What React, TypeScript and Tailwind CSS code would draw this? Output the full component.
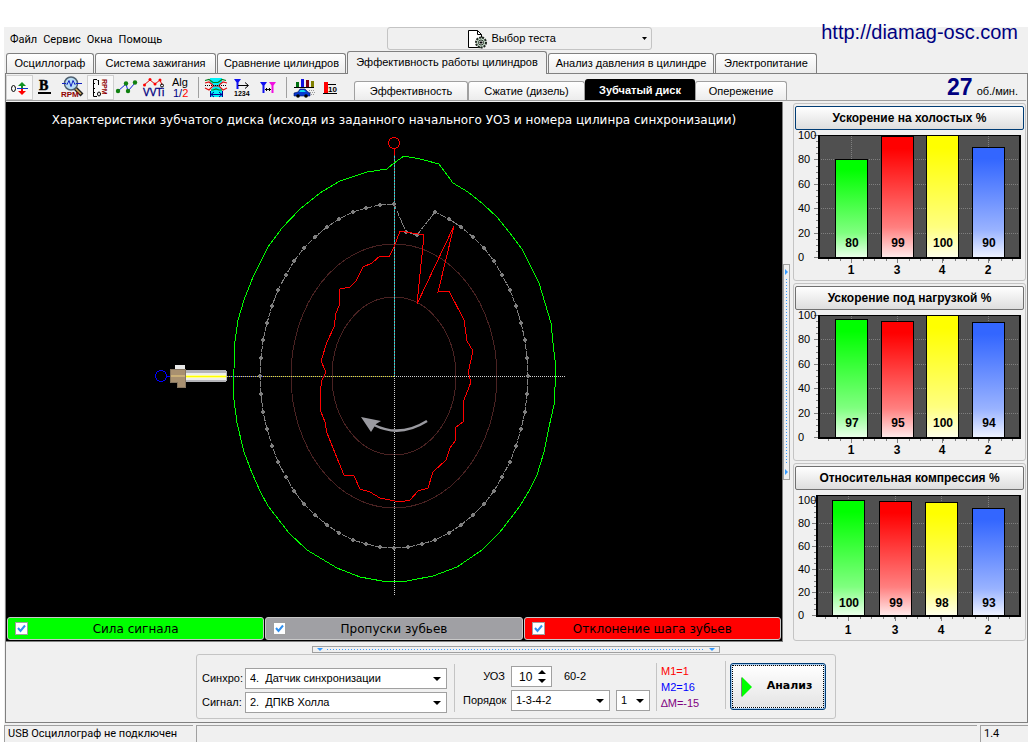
import { useState } from "react";
import type { ReactNode } from "react";

const MENU = ["Файл", "Сервис", "Окна", "Помощь"];

const MAIN_TABS = [
  { title: "Осциллограф", width: "w-[88px]" },
  { title: "Система зажигания", width: "w-[121px]" },
  { title: "Сравнение цилиндров", width: "w-[129px]" },
  { title: "Эффективность работы цилиндров", width: "w-[200px]" },
  { title: "Анализ давления в цилиндре", width: "w-[166px]" },
  { title: "Электропитание", width: "w-[102px]" },
];

const SUB_TABS = [
  { title: "Эффективность", width: "w-[114px]" },
  { title: "Сжатие (дизель)", width: "w-[117px]" },
  { title: "Зубчатый диск", width: "w-[110px]" },
  { title: "Опережение", width: "w-[92px]" },
];

/* TOOLBAR ICONS */
function Icon({ children }: { children: ReactNode }) {
  return (
    <svg width="27" height="25" viewBox="0 0 27 25" fill="none" className="block" aria-hidden="true">
      {children}
    </svg>
  );
}

const TOOLS = [
  {
    name: "Смещение нуля",
    pressed: true,
    icon: (
      <Icon>
        <ellipse cx="7.5" cy="13.5" rx="2" ry="3" stroke="#000" />
        <path d="M11 13.5h11" stroke="#1030c0" />
        <path d="M16 7l4 4h-3v2h-2v-2h-3z" fill="#109020" />
        <path d="M16 20l4-4h-3v-2h-2v2h-3z" fill="#f00" />
      </Icon>
    ),
  },
  {
    name: "Толщина линий",
    icon: (
      <Icon>
        <text x="6" y="15" fontSize="14" fontWeight="bold" fill="#000" stroke="#000" strokeWidth="0.5" className="font-['Liberation_Serif',serif]">B</text>
        <path d="M5 18h13" stroke="#000" strokeWidth="2" />
      </Icon>
    ),
  },
  {
    name: "Обороты",
    icon: (
      <Icon>
        <path d="M14 12l8 8" stroke="#222" strokeWidth="4" />
        <path d="M14 12l7 7" stroke="#d8b060" strokeWidth="1.5" />
        <circle cx="11" cy="8.5" r="6.5" fill="#b8dcf4" stroke="#506070" strokeWidth="1.5" />
        <path d="M2 8.5h4l1 1 2-4 2 6 2-6 2 4 1-1h6" stroke="#1020c0" />
        <text x="1" y="22" fontSize="8" fontWeight="bold" fill="#900000">RPM</text>
      </Icon>
    ),
  },
  {
    name: "Шкала оборотов",
    pressed: true,
    icon: (
      <Icon>
        <path d="M10 4.5H6.500v17H10M6 8.500h2M6 13.500h2M6 17.500h2" stroke="#000" />
        <path d="M10.500 6l1-1v5" stroke="#000" />
        <ellipse cx="12" cy="19" rx="1.500" ry="2" stroke="#000" />
        <text transform="translate(15 4) rotate(90)" fontSize="7" fontWeight="bold" fill="#900000">RPM</text>
      </Icon>
    ),
  },
  {
    name: "График по точкам",
    icon: (
      <Icon>
        <path d="M4 16l8-7 2 7 7-8" stroke="#1020e0" />
        <g fill="#108010">
          <circle cx="4" cy="16" r="2.200" />
          <circle cx="12" cy="8.500" r="2.200" />
          <circle cx="14" cy="16" r="2.200" />
          <circle cx="21" cy="7.500" r="2.200" />
        </g>
      </Icon>
    ),
  },
  {
    name: "Фазы VVTi",
    icon: (
      <Icon>
        <path d="M3 10l6-5 5 4 5-4 2 5" stroke="#e01010" />
        <g fill="#f00">
          <circle cx="3.500" cy="10" r="1.500" />
          <circle cx="9" cy="4.500" r="1.500" />
          <circle cx="14" cy="9" r="1.500" />
          <circle cx="19" cy="5" r="1.500" />
        </g>
        <circle cx="21" cy="10.500" r="1.500" stroke="#000" />
        <text x="2" y="21" fontSize="10" fill="#000080" stroke="#000080" strokeWidth="0.300">VVTi</text>
      </Icon>
    ),
  },
  {
    name: "Алгоритм",
    icon: (
      <Icon>
        <text x="4" y="11" fontSize="11" fill="#000">Alg</text>
        <text x="5" y="22" fontSize="11" fill="#000080">1/<tspan fill="#f00">2</tspan></text>
      </Icon>
    ),
  },
  {
    name: "Ширина окна",
    separated: true,
    icon: (
      <Icon>
        <path d="M8 3h12v4l-2 3v2l2 3v7H9v-7l2-3v-2L8 7z" fill="#00f0f8" />
        <path d="M3 5.500l4-1 4 3h5l4-3 4 1" stroke="#008020" strokeWidth="1.200" />
        <path d="M3 13l4 2 4-4h6l4 4 4-2" stroke="#e01010" strokeWidth="1.200" />
        <path d="M3 10.500h22" stroke="#000" strokeDasharray="1 1" />
        <path d="M3 8l4-1 4 3M17 10l4-3 4 1" stroke="#e01010" strokeWidth="1.200" />
        <path d="M9 15h2l3-1 3 1h3" stroke="#008020" strokeWidth="1.200" />
        <path d="M8.500 16v6M20.500 16v6M9 19.500h11M12 17l-3 2.500 3 2.500M17 17l3 2.500-3 2.500" stroke="#000090" />
      </Icon>
    ),
  },
  {
    name: "Порядок цилиндров",
    icon: (
      <Icon>
        <path d="M5 4h7l-2.500 3.500V14h-2V7.500z" fill="#1010f0" />
        <path d="M9 10.500h10M16 7.500l3.500 3-3.500 3" stroke="#000" />
        <text x="5" y="21" fontSize="7" fontWeight="bold" fill="#000">1234</text>
      </Icon>
    ),
  },
  {
    name: "Интервал между метками",
    icon: (
      <Icon>
        <path d="M4 7h7L8.500 10.500V18h-2v-7.500z" fill="#1010f0" />
        <path d="M13 7h7l-2.500 3.500V18h-2v-7.500z" fill="#f010e0" />
        <path d="M9 14.500h6M11 13l-1.500 1.500 1.500 1.500M13 13l1.500 1.500-1.500 1.500" stroke="#000" />
      </Icon>
    ),
  },
  {
    name: "Динамика автомобиля",
    separated: true,
    icon: (
      <Icon>
        <path d="M6 7h3v5H6z" fill="#007010" />
        <path d="M11 4h3v8h-3z" fill="#1010e0" />
        <path d="M16 5h3v7h-3z" fill="#800010" />
        <path d="M21 6h3v6h-3z" fill="#808000" />
        <path d="M4 12.500h20" stroke="#000" />
        <path d="M4 18l4-1 2-3h5l3 3 2 1v3H4z" fill="#0838d0" stroke="#001060" strokeWidth="0.600" />
        <path d="M9 17l1.500-2H14l2 2z" fill="#10d8f0" />
        <circle cx="8" cy="21" r="1.800" fill="#000" />
        <circle cx="16" cy="21" r="1.800" fill="#000" />
        <path d="M19 15.500h5M20 17.500h5M21 19.500h3" stroke="#999" strokeDasharray="1 1" />
      </Icon>
    ),
  },
  {
    name: "Столбцы",
    icon: (
      <Icon>
        <path d="M7 7h4v11H7z" fill="#f00" />
        <path d="M11 9.500h8M6 18.500h14" stroke="#000" />
        <text x="11" y="17" fontSize="8" fontWeight="bold" fill="#000">10</text>
      </Icon>
    ),
  },
];

function Toolbar() {
  return (
    <div className="flex w-[348px] shrink-0 items-center pt-px">
      {TOOLS.map((tool) => (
        <div key={tool.name} className="flex h-[25px]">
          {tool.separated && <div className="mx-[3px] my-0.5 w-px bg-[#a0a0a0]" />}
          <button
            type="button"
            aria-label={tool.name}
            title={tool.name}
            className={tool.pressed ? "w-[27px] overflow-hidden bg-[#f8f8f8] inset-ring inset-ring-[#d0d0d0]" : "w-[27px] overflow-hidden"}
          >
            {tool.icon}
          </button>
        </div>
      ))}
    </div>
  );
}

/* TOOTHED DISC PLOT */
const CX = 394;
const CY = 376;

// 60-2 wheel: the two missing teeth sit closer to the centre
const TEETH = Array.from({ length: 60 }, (_, i) => {
  const angle = (i * 6 * Math.PI) / 180;
  const k = i === 1 || i === 2 ? 0.84 : 1;
  return [Math.round(CX + 134 * k * Math.sin(angle)), Math.round(CY - 172 * k * Math.cos(angle))];
});

const SIGNAL =
  "394,163 404,156 420,159 439,164 453,183 468,192 483,204 497,217 509,232 522,249 530,265 539,283 545,303 551,323 553,343 556,369 555,387 554,405 549,427 544,452 537,475 529,491 520,506 500,532 482,550 457,567 433,576 407,581 382,581 360,577 337,568 307,550 289,533 268,506 260,491 252,473 244,452 237,423 233,392 233,376 234,369 235,341 238,320 244,300 253,277 268,247 282,228 300,209 320,193 340,181 367,172 387,169";

const DEVIATION =
  "400,231 424,235 417,304 454,226 438,292 449,291 464,320 467,341 473,351 469,369 468,372 471,382 464,400 463,422 456,427 455,441 450,448 446,460 433,472 428,488 418,491 410,500 400,502 380,498 370,492 360,489 354,476 344,475 337,458 327,433 325,422 321,412 320,392 322,380 326,372 321,361 327,342 334,327 336,313 339,306 340,289 350,287 356,281 363,267 372,263 380,256 389,257 394,247";

function DiscPlot({ signal, gaps, deviation }: { signal: boolean; gaps: boolean; deviation: boolean }) {
  return (
    <svg viewBox="6 130 776 486" className="block w-full" fill="none" shapeRendering="crispEdges" role="img" aria-label="Зубчатый диск">
      <ellipse cx={CX} cy={CY} rx="103" ry="132" stroke="#4a2222" />
      <ellipse cx={CX} cy={CY} rx="62" ry="79" stroke="#4a2222" />

      {/* axes */}
      <path d="M394.500 152V376" stroke="#30d8d8" />
      <path d="M394.500 152V376" stroke="#b05050" strokeDasharray="1 2" />
      <path d="M394.500 376V596M394 376.500H565" stroke="#d0d0d0" strokeDasharray="1 1" />
      <path d="M227 376.500H264" stroke="#2020e0" />
      <path d="M264 376.500H394" stroke="#30306a" />
      <path d="M227 376.500H394" stroke="#f0e820" strokeDasharray="1 1" />

      {signal && <polygon points={SIGNAL} stroke="#00ff00" />}
      {gaps && (
        <g>
          <polygon points={TEETH.map((p) => p.join(",")).join(" ")} stroke="#808080" strokeDasharray="6 1" />
          {TEETH.map(([x, y]) => (
            <path key={`${x}-${y}`} d={`M${x - 2} ${y - 1}h1v-1h2v1h1v2h-1v1h-2v-1h-1z`} fill="#808080" />
          ))}
        </g>
      )}
      {deviation && <polygon points={DEVIATION} stroke="#ff0000" />}

      {/* top dead centre mark */}
      <circle cx="394" cy="143" r="5.500" stroke="#ff0000" />
      <path d="M394.500 148v7" stroke="#ff0000" />

      {/* sensor */}
      <circle cx="161" cy="376" r="5.500" stroke="#0000ff" />
      <path d="M166 376.500h5" stroke="#0000ff" />
      <path d="M185 370h41v1h1v10h-1v1h-41z" fill="#b4b4b8" />
      <path d="M186 373h40v7h-40z" fill="#eeeeea" />
      <path d="M186 375h40v3h-40z" fill="#ffff90" />
      <path d="M186 376h40v1h-40z" fill="#ffff00" />
      <path d="M175 365h10v4h-10z" fill="#e8e8e8" />
      <path d="M170.500 369.500h15v18h-8v-5h-7z" fill="#a89070" stroke="#857560" />
      <path d="M171 375h14v2h-14z" fill="#cbb078" />

      {/* rotation direction */}
      <g shapeRendering="auto">
        <path d="M374 425Q400 438 427 421" stroke="#9a9aa0" strokeWidth="2.500" />
        <path d="M361 417l20 4-5 3-5 8z" fill="#9a9aa0" />
      </g>
    </svg>
  );
}

function Legend({ title, color, checked, onChange }: { title: string; color: string; checked: boolean; onChange: (v: boolean) => void }) {
  return (
    <label className={`flex h-[23px] flex-1 items-center rounded-[3px] border border-[#c8c8c8] px-[7px] ${color}`}>
      <span className="grid">
        <input
          type="checkbox"
          checked={checked}
          onChange={(e) => onChange(e.target.checked)}
          className="peer col-start-1 row-start-1 size-[13px] appearance-none border border-[#a0a0a0] bg-white"
        />
        <svg viewBox="0 0 13 13" className="pointer-events-none invisible col-start-1 row-start-1 size-[13px] peer-checked:visible" fill="none">
          <path d="M3 6l2.500 3L10 3.500" stroke="#2f8fef" strokeWidth="2" />
        </svg>
      </span>
      <span className="flex-1 pr-[13px] text-center font-['DejaVu_Sans',Verdana,sans-serif] text-[12px]">{title}</span>
    </label>
  );
}

/* SIDE BAR CHARTS */
type Chart = {
  id: string;
  title: string;
  focused?: boolean;
  left: number;
  top: number;
  zero: number;
  xs: number[];
  values: number[];
};

const CHARTS: Chart[] = [
  { id: "idle", title: "Ускорение на холостых %", focused: true, left: 26, top: 7, zero: 129, xs: [42, 88, 133, 179], values: [80, 99, 100, 90] },
  { id: "load", title: "Ускорение под нагрузкой %", left: 26, top: 7, zero: 129, xs: [42, 88, 133, 179], values: [97, 95, 100, 94] },
  { id: "comp", title: "Относительная компрессия %", left: 24, top: 12, zero: 127, xs: [39, 86, 132, 179], values: [100, 99, 98, 93] },
];

const BAR_COLORS = ["#00ff00", "#ff0000", "#ffff00", "#3366ff"];
const CYLINDERS = [1, 3, 4, 2];

function BarChart({ id, left, top, zero, xs, values }: Chart) {
  const y = (v: number) => Math.round(zero - ((zero - top) * v) / 100);
  const minor = Array.from({ length: 21 }, (_, i) => i * 5);
  const ticks = Array.from({ length: 17 }, (_, i) => xs[0] - 7 + Math.round(i * 11.5)).filter((x) => x < 226);

  return (
    <svg viewBox="2 2 229 149" className="block w-full text-[12px]" shapeRendering="crispEdges" role="img" aria-label={id}>
      <defs>
        {BAR_COLORS.map((c) => (
          <linearGradient key={c} id={`${id}-${c.slice(1)}`} x1="0" y1="0" x2="0" y2="1">
            <stop offset="0.1" stopColor={c} />
            <stop offset="0.75" stopColor={c} stopOpacity="0.5" />
            <stop offset="1" stopColor={c} stopOpacity="0.08" />
          </linearGradient>
        ))}
      </defs>
      <rect x={left} y="7" width={227 - left} height={zero - 6} fill="#505050" />
      {[20, 40, 60, 80].map((v) => (
        <path key={v} d={`M${left} ${y(v) + 0.5}H226`} stroke="#808080" strokeDasharray="1 1" />
      ))}
      {xs.map((x) => (
        <path key={x} d={`M${x + 16.5} 8V${zero}`} stroke="#808080" strokeDasharray="1 1" />
      ))}
      {minor.map((v) => (
        <path key={v} d={`M${left - (v % 20 ? 3 : 5)} ${y(v) + 0.5}H${left}`} stroke="#808080" />
      ))}
      {ticks.map((x) => (
        <path key={x} d={`M${x + 0.5} ${zero + 2}v2`} stroke="#808080" />
      ))}
      <path d={`M${left - 1} 7.500H228`} stroke="#000" />
      <path d={`M${left} 7V${zero + 1}H227V7`} fill="none" stroke="#000" strokeWidth="2" />
      {[0, 20, 40, 60, 80, 100].map((v) => (
        <text key={v} x="5" y={y(v) + 4} fontSize="11">{v}</text>
      ))}
      {xs.map((x, i) => (
        <g key={x} fontWeight="bold" textAnchor="middle">
          <rect x={x + 0.5} y={y(values[i]) + 0.5} width="32" height={zero - y(values[i])} fill="#fff" />
          <rect x={x + 0.5} y={y(values[i]) + 0.5} width="32" height={zero - y(values[i])} fill={`url(#${id}-${BAR_COLORS[i].slice(1)})`} stroke="#000" />
          <text x={x + 17} y="119">{values[i]}</text>
          <path d={`M${x + 16.5} ${zero + 2}v4`} stroke="#808080" />
          <text x={x + 16} y="146">{CYLINDERS[i]}</text>
        </g>
      ))}
    </svg>
  );
}

function ChartPanel(props: Chart) {
  return (
    <section className="rounded-[3px] border border-[#c4c4c4] p-px pt-0.5">
      <button
        type="button"
        className={`block h-6 w-full rounded-[2px] border bg-linear-to-b from-white to-[#dedede] text-[12px] font-bold ${props.focused ? "border-[#003c74]" : "border-[#707070]"}`}
      >
        {props.title}
      </button>
      <BarChart {...props} />
    </section>
  );
}

function Triangle({ d, className }: { d: string; className: string }) {
  return (
    <svg viewBox="0 0 8 4" className={`pointer-events-none h-1 w-2 ${className}`} aria-hidden="true">
      <path d={d} fill="currentColor" />
    </svg>
  );
}

const DOWN = "M0 0h8L4 4z";
const UP = "M0 4h8L4 0z";

function Dropdown({ id, options, className, label }: { id: string; options: string[]; className: string; label?: string }) {
  return (
    <span className={`grid items-center ${className}`}>
      <select id={id} aria-label={label} className="col-start-1 row-start-1 h-[21px] w-full appearance-none border border-[#a0a0a0] bg-white px-1 text-[11px] leading-none">
        {options.map((o) => (
          <option key={o}>{o}</option>
        ))}
      </select>
      <Triangle d={DOWN} className="col-start-1 row-start-1 mr-1.5 justify-self-end" />
    </span>
  );
}

function Controls() {
  const [advance, setAdvance] = useState(10);

  return (
    <form className="mx-auto flex h-[65px] w-[640px] items-start rounded-[3px] border border-[#c4c4c4] px-[5px] text-[11px]">
      <div className="mt-[13px] grid grid-cols-[43px_202px] items-center gap-y-[3px]">
        <label htmlFor="sync">Синхро:</label>
        <Dropdown id="sync" options={["4.\u00a0\u00a0Датчик синхронизации"]} className="w-full" />
        <label htmlFor="sig">Сигнал:</label>
        <Dropdown id="sig" options={["2.\u00a0\u00a0ДПКВ Холла"]} className="w-full" />
      </div>
      <div className="mt-[9px] ml-[7px] h-12 w-px bg-[#c4c4c4]" />
      <div className="mt-[11px] ml-2 grid grid-cols-[42px_139px] items-center gap-x-1.5 gap-y-[3px]">
        <label htmlFor="advance" className="text-right">УОЗ</label>
        <div className="flex items-center">
          <span className="flex h-[21px] w-[41px] border border-[#a0a0a0] bg-white">
            <input
              id="advance"
              inputMode="numeric"
              value={advance}
              onChange={(e) => setAdvance(Number(e.target.value) || 0)}
              className="w-[26px] pl-[7px] text-[12px] outline-none"
            />
            <span className="flex flex-col justify-center gap-[5px]">
              <button type="button" aria-label="Больше" onClick={() => setAdvance(advance + 1)}>
                <Triangle d={UP} className="block" />
              </button>
              <button type="button" aria-label="Меньше" onClick={() => setAdvance(advance - 1)}>
                <Triangle d={DOWN} className="block" />
              </button>
            </span>
          </span>
          <span className="ml-3">60-2</span>
        </div>
        <label htmlFor="order" className="text-right">Порядок</label>
        <div className="flex gap-1.5">
          <Dropdown id="order" options={["1-3-4-2"]} className="w-[99px]" />
          <Dropdown id="cylinder" label="Цилиндр" options={["1"]} className="w-[34px]" />
        </div>
      </div>
      <div className="mt-2 ml-1.5 h-12 w-px bg-[#c4c4c4]" />
      <div className="mt-2 ml-1 w-16 text-[11px] leading-4">
        <p className="text-[#f00]">M1=1</p>
        <p className="text-[#00f]">M2=16</p>
        <p className="text-[#800080]">∆M=-15</p>
      </div>
      <div className="mt-1.5 h-12 w-px bg-[#c4c4c4]" />
      <button type="button" className="mt-2 ml-1 h-[47px] w-24 rounded-[3px] border border-[#003c74] bg-[#a8ccf0] p-px">
        <span className="flex h-full items-center border border-dotted border-black bg-linear-to-b from-white to-[#e4e4e4] pl-2 font-['DejaVu_Sans',Verdana,sans-serif] text-[11px] font-bold">
          <svg viewBox="0 0 11 20" className="h-5 w-[11px]" aria-hidden="true">
            <path d="M0.500 0.500v19" stroke="#808080" />
            <path d="M1 0l10 10L1 20z" fill="#00ff00" />
          </svg>
          <span className="flex-1 pl-1 text-center">Анализ</span>
        </span>
      </button>
    </form>
  );
}

export default function App() {
  const [tab, setTab] = useState(3);
  const [subTab, setSubTab] = useState(2);
  const [shown, setShown] = useState([true, true, true]);

  const toggle = (i: number) => (v: boolean) => setShown(shown.map((s, k) => (k === i ? v : s)));

  return (
    <div className="flex min-h-screen flex-col bg-white px-1 pt-[27px] pb-1 font-['Liberation_Sans',Arial,sans-serif] text-[11px] text-black">
      <div className="flex flex-1 flex-col bg-[#f0f0f0]">
        {/* MENU */}
        <header className="relative flex h-6">
          <nav className="flex flex-1 items-center gap-1.5 pt-0.5 pl-1.5 font-[Roboto,Tahoma,sans-serif]">
            {MENU.map((m) => (
              <button key={m} type="button">{m}</button>
            ))}
          </nav>
          <button type="button" className="flex h-[23px] w-[265px] items-center justify-end rounded-[3px] border border-[#c4c4c4] pr-1">
            <svg width="22" height="20" viewBox="0 0 22 20" fill="none" aria-hidden="true">
              <path d="M1.500 1.500h9l4 4v13h-13z" fill="#fff" stroke="#000" />
              <path d="M10.500 1.500v4h4" stroke="#000" />
              <circle cx="14" cy="13.500" r="5" fill="#c4d8c8" stroke="#202820" strokeWidth="2" strokeDasharray="2 1" />
              <circle cx="14" cy="13.500" r="2.500" fill="#fff" stroke="#203020" />
              <path d="M14 12v3M12.500 13.500h3" stroke="#000" />
            </svg>
            <span className="ml-[3px] w-[150px] text-left">Выбор теста</span>
            <svg width="5" height="3" viewBox="0 0 5 3" aria-hidden="true">
              <path d="M0 0h5L2.500 3z" />
            </svg>
          </button>
          <div className="flex-1" />
          <a href="http://diamag-osc.com" className="absolute -top-2 right-2.5 text-[20px] leading-[26px] text-[#000080]">
            http://diamag-osc.com
          </a>
        </header>

        {/* MAIN TABS */}
        <div role="tablist" className="flex h-[22px] items-end gap-px pl-0.5">
          {MAIN_TABS.map((t, i) => (
            <button
              key={t.title}
              type="button"
              role="tab"
              aria-selected={i === tab}
              onClick={() => setTab(i)}
              className={`rounded-t-[3px] border border-[#808080] whitespace-nowrap ${t.width} ${
                i === tab ? "relative -mb-px h-[23px] border-b-0 bg-[#f0f0f0] pb-0.5" : "h-5 border-b-0 bg-linear-to-b from-white to-[#ececec]"
              }`}
            >
              {t.title}
            </button>
          ))}
        </div>

        <main className="ml-px flex flex-1 flex-col border border-[#808080] pr-px">
          {/* TOOLBAR AND SUB TABS */}
          <div className="flex h-[27px] border-b border-[#a0a0a0]">
            <Toolbar />
            <div role="tablist" className="flex items-end">
              {SUB_TABS.map((t, i) => (
                <button
                  key={t.title}
                  type="button"
                  role="tab"
                  aria-selected={i === subTab}
                  onClick={() => setSubTab(i)}
                  className={`rounded-t-[3px] border border-b-0 whitespace-nowrap ${t.width} ${
                    i === subTab ? "h-[21px] border-black bg-black font-bold text-white" : "h-[19px] border-[#a0a0a0] bg-linear-to-b from-white to-[#ececec]"
                  }`}
                >
                  {t.title}
                </button>
              ))}
            </div>
            <p className="ml-auto flex items-baseline gap-1 pr-2 leading-[27px]">
              <strong className="text-[23px] text-[#000080]">27</strong>
              <span>об./мин.</span>
            </p>
          </div>

          <div className="flex pt-px">
            {/* PLOT */}
            <div className="flex min-w-0 flex-1 flex-col border-r border-b border-[#808080] bg-black">
              <h1 className="pt-2 text-center font-['DejaVu_Sans',Verdana,sans-serif] text-[12px] leading-5 whitespace-nowrap text-white">
                Характеристики зубчатого диска (исходя из заданного начального УОЗ и номера цилинра синхронизации)
              </h1>
              <DiscPlot signal={shown[0]} gaps={shown[1]} deviation={shown[2]} />
              <div className="mt-px flex gap-px px-px pb-px">
                <Legend title="Сила сигнала" color="bg-[#00ff00]" checked={shown[0]} onChange={toggle(0)} />
                <Legend title="Пропуски зубьев" color="bg-[#a0a0a4]" checked={shown[1]} onChange={toggle(1)} />
                <Legend title="Отклонение шага зубьев" color="bg-[#ff0000]" checked={shown[2]} onChange={toggle(2)} />
              </div>
            </div>

            {/* VERTICAL SPLITTER */}
            <div className="mr-[3px] flex h-[216px] w-[7px] flex-col items-center justify-between self-center border border-[#a0a0a0] py-1 text-[#3399ff]">
              <svg width="3" height="6" viewBox="0 0 3 6"><path d="M0 0l3 3-3 3z" fill="currentColor" /></svg>
              <div className="my-1 w-px flex-1 bg-[repeating-linear-gradient(#3399ff_0_1px,transparent_1px_3px)]" />
              <svg width="3" height="6" viewBox="0 0 3 6"><path d="M0 0l3 3-3 3z" fill="currentColor" /></svg>
            </div>

            <aside className="flex w-[233px] shrink-0 flex-col gap-0.5 pt-px">
              {CHARTS.map((c) => (
                <ChartPanel key={c.id} {...c} />
              ))}
            </aside>
          </div>

          {/* HORIZONTAL SPLITTER */}
          <div className="mx-auto mt-1 mb-px flex h-[7px] w-[408px] items-center border border-[#a0a0a0] px-1 text-[#3399ff]">
            <svg width="6" height="3" viewBox="0 0 6 3"><path d="M0 0h6L3 3z" fill="currentColor" /></svg>
            <div className="mx-1 h-px flex-1 bg-[repeating-linear-gradient(90deg,#3399ff_0_1px,transparent_1px_3px)]" />
            <svg width="6" height="3" viewBox="0 0 6 3"><path d="M0 0h6L3 3z" fill="currentColor" /></svg>
          </div>

          <Controls />
        </main>

        {/* STATUS BAR */}
        <footer className="mt-0.5 flex h-[17px] gap-[3px] font-[Roboto,Tahoma,sans-serif] leading-4">
          <div className="w-[189px] border-t border-l border-[#a0a0a0] pl-[3px]">USB Осциллограф не подключен</div>
          <div className="flex-1 border-t border-l border-[#a0a0a0]" />
          <div className="w-12 border-t border-l border-[#a0a0a0] pl-[3px]">1.4</div>
        </footer>
      </div>
    </div>
  );
}
